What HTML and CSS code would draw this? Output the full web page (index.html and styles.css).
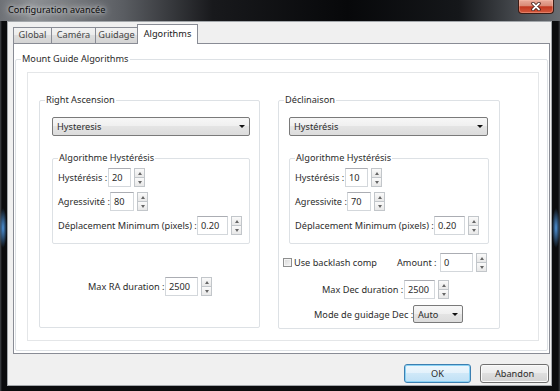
FILE: index.html
```html
<!DOCTYPE html>
<html lang="fr">
<head>
  <meta charset="UTF-8">
  <title>Configuration avancée</title>
  <link rel="stylesheet" href="styles.css">
</head>
<body>
  <div class="window">
    <div class="titlebar">
      <span class="title">Configuration avancée</span>
      <span class="close">
        <svg width="10" height="9" viewBox="0 0 10 9">
          <path d="M2 1.5 L8 7.5 M8 1.5 L2 7.5" stroke="#3a1510" stroke-width="3.4" stroke-linecap="round"/>
          <path d="M2 1.5 L8 7.5 M8 1.5 L2 7.5" stroke="#fff" stroke-width="1.8" stroke-linecap="round"/>
        </svg>
      </span>
    </div>
    <div class="client">
      <div class="tabs">
        <span class="tab tab-global">Global</span>
        <span class="tab tab-camera">Caméra</span>
        <span class="tab tab-guidage">Guidage</span>
        <span class="tab tab-algo active">Algorithms</span>
      </div>
      <div class="tabpage">
        <div class="group main-group">
          <span class="group-title">Mount Guide Algorithms</span>
          <div class="frame">

            <!-- Right Ascension -->
            <div class="group axis ra">
              <span class="group-title">Right Ascension</span>
              <div class="combo"><span>Hysteresis</span><span class="arrow"></span></div>
              <div class="group algo">
                <span class="group-title">Algorithme Hystérésis</span>
                <div class="field first">
                  <span class="lbl lbl-hyst">Hystérésis :</span>
                  <span class="num num-s">20</span>
                  <span class="spin"><span class="up"></span><span class="down"></span></span>
                </div>
                <div class="field">
                  <span class="lbl lbl-agr">Agressivité :</span>
                  <span class="num num-m">80</span>
                  <span class="spin"><span class="up"></span><span class="down"></span></span>
                </div>
                <div class="field">
                  <span class="lbl lbl-dep">Déplacement Minimum (pixels) :</span>
                  <span class="num num-l">0.20</span>
                  <span class="spin"><span class="up"></span><span class="down"></span></span>
                </div>
              </div>
              <div class="field max-ra">
                <span class="lbl lbl-maxra">Max RA duration :</span>
                <span class="num num-xl">2500</span>
                <span class="spin"><span class="up"></span><span class="down"></span></span>
              </div>
            </div>

            <!-- Declinaison -->
            <div class="group axis dec">
              <span class="group-title">Déclinaison</span>
              <div class="combo"><span>Hystérésis</span><span class="arrow"></span></div>
              <div class="group algo">
                <span class="group-title">Algorithme Hystérésis</span>
                <div class="field first">
                  <span class="lbl lbl-hyst">Hystérésis :</span>
                  <span class="num num-s">10</span>
                  <span class="spin"><span class="up"></span><span class="down"></span></span>
                </div>
                <div class="field">
                  <span class="lbl lbl-agr">Agressivite :</span>
                  <span class="num num-m">70</span>
                  <span class="spin"><span class="up"></span><span class="down"></span></span>
                </div>
                <div class="field">
                  <span class="lbl lbl-dep">Déplacement Minimum (pixels) :</span>
                  <span class="num num-l">0.20</span>
                  <span class="spin"><span class="up"></span><span class="down"></span></span>
                </div>
              </div>
              <div class="field backlash">
                <span class="check-wrap"><span class="checkbox"></span>Use backlash comp</span>
                <span class="lbl lbl-amount">Amount :</span>
                <span class="num num-xl">0</span>
                <span class="spin"><span class="up"></span><span class="down"></span></span>
              </div>
              <div class="field max-dec">
                <span class="lbl lbl-maxdec">Max Dec duration :</span>
                <span class="num num-l">2500</span>
                <span class="spin"><span class="up"></span><span class="down"></span></span>
              </div>
              <div class="field mode">
                <span class="lbl lbl-mode">Mode de guidage Dec :</span>
                <span class="combo small"><span>Auto</span><span class="arrow"></span></span>
              </div>
            </div>

          </div>
        </div>
      </div>
      <div class="buttons">
        <span class="btn btn-ok">OK</span>
        <span class="btn btn-cancel">Abandon</span>
      </div>
    </div>
  </div>
</body>
</html>
```

FILE: styles.css
```css
/* Window frame */
* { box-sizing: border-box; }
body { margin: 0; background: #000; font-family: 'Noto Sans', 'DejaVu Sans', sans-serif; font-size: 9.2px; color: #2c2c2c; }

.window {
  width: 560px; height: 391px; overflow: hidden;
  display: flex; flex-direction: column;
  background:
    radial-gradient(4px 20px at 3px 228px, #4d92d8, transparent),
    radial-gradient(4px 20px at 556px 228px, #4d92d8, transparent),
    linear-gradient(90deg, #45484d 0, #0b0c0e 2px, #0b0c0e 558px, #3a3d42 560px);
}

.titlebar {
  height: 21px; flex: none;
  display: flex; justify-content: space-between; align-items: flex-start;
  background: linear-gradient(90deg, #6e7176 0, #8d9094 6%, #5a5d62 22%, #18191c 38%, #07080a 62%, #15171a 82%, #4e5257 94%, #6a6e73 100%);
}
.title {
  padding: 4px 0 0 8px; line-height: 12px; color: #0a0a0a;
  text-shadow: 0 0 4px rgba(255,255,255,.8), 0 0 8px rgba(255,255,255,.6), 0 0 12px rgba(255,255,255,.4);
}
.close {
  width: 36px; height: 14px; margin-right: 6px;
  display: flex; align-items: center; justify-content: center;
  border: 1px solid #3b1c16; border-top: none; border-radius: 0 0 4px 4px;
  background: linear-gradient(#e9ab9b 0, #d98a76 45%, #c1371f 52%, #d55a3e 100%);
  box-shadow: inset 0 0 0 1px rgba(255,200,180,.35);
}

.client {
  flex: none; height: 365px; margin: 0 8px 0 7px;
  background: #f0f0f0; border: 1px solid #a3a7ab;
}

/* Tabs */
.tabs { height: 21px; padding: 2px 0 0 5px; display: flex; align-items: flex-end; }
.tab {
  height: 16px; margin-right: -1px; text-align: center; line-height: 14px;
  border: 1px solid #898c95; border-bottom: none;
  background: linear-gradient(#f2f2f2, #ebebeb 50%, #dddddd 50%, #d4d4d4);
  color: #444;
}
.tab-global { width: 39px; }
.tab-camera { width: 45px; }
.tab-guidage { width: 43px; }
.tab-algo { width: 61px; }
.tab.active {
  height: 20px; margin-bottom: -1px; line-height: 17px;
  background: #fff; color: #1a1a1a; position: relative; z-index: 1;
}

.tabpage {
  height: 311px; margin: 0 1px 0 5px; padding: 15px 1px 0 1px;
  border: 1px solid #898c95; background: #fff;
}

/* Group boxes */
.group { border: 1px solid #dde1e5; border-radius: 2px; }
.group-title {
  display: block; width: max-content; height: 12px; line-height: 12px;
  margin: -7px 0 0 5px; padding: 0 1px; background: #fff;
}
.main-group { height: 292px; }
.frame {
  height: 269px; margin: 7px 8px 0 11px; padding-top: 27px;
  border: 1px solid #e4e6e8; display: flex; align-items: flex-start;
}
.axis { height: 228px; }
.ra { width: 221px; margin-left: 11px; }
.dec { width: 222px; margin-left: 18px; height: 229px; }

.combo {
  height: 19px; display: flex; align-items: center; justify-content: space-between;
  padding: 0 4px; border: 1px solid #7a7a7a; border-radius: 2px;
  background: linear-gradient(#f7f7f7, #efefef 50%, #e4e4e4 50%, #dcdcdc);
}
.combo .arrow { width: 0; height: 0; border-left: 3px solid transparent; border-right: 3px solid transparent; border-top: 3px solid #111; }
.ra .combo { width: 198px; margin: 11px 0 0 12px; }
.dec .combo { width: 199px; margin: 11px 0 0 10px; }
.combo.small { width: 50px; height: 18px; margin: 0; }

.algo { height: 86px; }
.ra .algo { width: 198px; margin: 22px 0 0 12px; }
.dec .algo { width: 200px; margin: 22px 0 0 10px; }

/* Fields */
.field { height: 19px; margin-top: 5px; padding-left: 5px; display: flex; align-items: center; white-space: nowrap; }
.field.first { margin-top: 4px; }
.lbl { flex: none; }
.lbl-hyst { width: 50px; }
.lbl-agr { width: 52px; }
.lbl-dep { width: 139px; }
.lbl-maxra { width: 77px; }
.lbl-amount { width: 43px; }
.lbl-maxdec { width: 82px; }
.lbl-mode { width: 99px; }

.num {
  height: 19px; padding: 0 3px; line-height: 17px;
  border: 1px solid #d3d7db; border-top-color: #abadb3; background: #fff;
}
.num-s { width: 23px; }
.num-m { width: 24px; }
.num-l { width: 31px; }
.num-xl { width: 33px; }

.spin { width: 11px; height: 19px; margin-left: 3px; display: flex; flex-direction: column; }
.spin span {
  flex: 1; display: flex; align-items: center; justify-content: center;
  border: 1px solid #c2c6ca; background: linear-gradient(#fafafa, #e8e8e8);
}
.spin .down { border-top: none; }
.spin .up::after { content: ""; border-left: 2.5px solid transparent; border-right: 2.5px solid transparent; border-bottom: 3px solid #666; }
.spin .down::after { content: ""; border-left: 2.5px solid transparent; border-right: 2.5px solid transparent; border-top: 3px solid #666; }

.max-ra { margin-top: 33px; padding-left: 48px; }
.backlash { margin-top: 9px; padding-left: 4px; }
.check-wrap { width: 114px; display: flex; align-items: center; gap: 2px; }
.checkbox {
  width: 9px; height: 9px; border: 1px solid #8e8f8f;
  background: linear-gradient(135deg, #d6d6d6, #f8f8f8);
  box-shadow: inset 0 0 0 1px #f4f4f4;
}
.max-dec { margin-top: 8px; padding-left: 43px; }
.mode { margin-top: 6px; height: 18px; padding-left: 35px; }

/* Buttons */
.buttons { height: 31px; padding: 10px 2px 0 0; display: flex; justify-content: flex-end; gap: 9px; }
.btn {
  height: 19px; line-height: 17px; text-align: center;
  border: 1px solid #707070; border-radius: 3px;
  background: linear-gradient(#f4f4f4, #ececec 50%, #dfdfdf 50%, #d3d3d3);
  box-shadow: inset 0 0 0 1px #fbfbfb;
}
.btn-ok {
  width: 67px; border-color: #3c7fb1;
  background: linear-gradient(#eef7fd, #e2f1fb 50%, #cfe8f8 50%, #bfe0f5);
  box-shadow: inset 0 0 0 1px #8ad2f4;
}
.btn-cancel { width: 69px; }
```
